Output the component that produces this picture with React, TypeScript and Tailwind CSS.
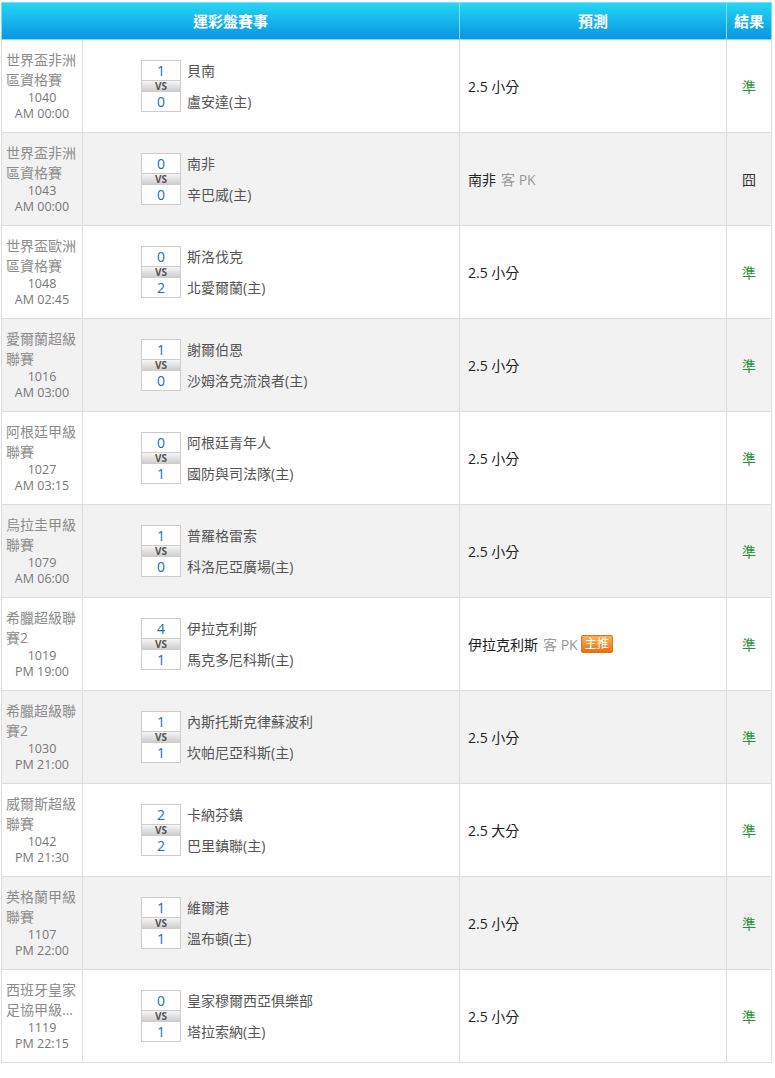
import React from "react";

type Row = {
  league: string[];
  code: string;
  time: string;
  s1: number;
  s2: number;
  t1: string;
  t2: string;
  pred: { main: string; sub?: string; badge?: boolean };
  result: string;
};

const rows: Row[] = [
  { league: ["世界盃非洲", "區資格賽"], code: "1040", time: "AM 00:00", s1: 1, s2: 0, t1: "貝南", t2: "盧安達(主)", pred: { main: "2.5 小分" }, result: "準" },
  { league: ["世界盃非洲", "區資格賽"], code: "1043", time: "AM 00:00", s1: 0, s2: 0, t1: "南非", t2: "辛巴威(主)", pred: { main: "南非", sub: "客 PK" }, result: "囧" },
  { league: ["世界盃歐洲", "區資格賽"], code: "1048", time: "AM 02:45", s1: 0, s2: 2, t1: "斯洛伐克", t2: "北愛爾蘭(主)", pred: { main: "2.5 小分" }, result: "準" },
  { league: ["愛爾蘭超級", "聯賽"], code: "1016", time: "AM 03:00", s1: 1, s2: 0, t1: "謝爾伯恩", t2: "沙姆洛克流浪者(主)", pred: { main: "2.5 小分" }, result: "準" },
  { league: ["阿根廷甲級", "聯賽"], code: "1027", time: "AM 03:15", s1: 0, s2: 1, t1: "阿根廷青年人", t2: "國防與司法隊(主)", pred: { main: "2.5 小分" }, result: "準" },
  { league: ["烏拉圭甲級", "聯賽"], code: "1079", time: "AM 06:00", s1: 1, s2: 0, t1: "普羅格雷索", t2: "科洛尼亞廣場(主)", pred: { main: "2.5 小分" }, result: "準" },
  { league: ["希臘超級聯", "賽2"], code: "1019", time: "PM 19:00", s1: 4, s2: 1, t1: "伊拉克利斯", t2: "馬克多尼科斯(主)", pred: { main: "伊拉克利斯", sub: "客 PK", badge: true }, result: "準" },
  { league: ["希臘超級聯", "賽2"], code: "1030", time: "PM 21:00", s1: 1, s2: 1, t1: "內斯托斯克律蘇波利", t2: "坎帕尼亞科斯(主)", pred: { main: "2.5 小分" }, result: "準" },
  { league: ["威爾斯超級", "聯賽"], code: "1042", time: "PM 21:30", s1: 2, s2: 2, t1: "卡納芬鎮", t2: "巴里鎮聯(主)", pred: { main: "2.5 大分" }, result: "準" },
  { league: ["英格蘭甲級", "聯賽"], code: "1107", time: "PM 22:00", s1: 1, s2: 1, t1: "維爾港", t2: "溫布頓(主)", pred: { main: "2.5 小分" }, result: "準" },
  { league: ["西班牙皇家", "足協甲級..."], code: "1119", time: "PM 22:15", s1: 0, s2: 1, t1: "皇家穆爾西亞俱樂部", t2: "塔拉索納(主)", pred: { main: "2.5 小分" }, result: "準" },
];

const font = { fontFamily: '"Open Sans", "Noto Sans CJK TC", sans-serif' };

function ScoreBox({ s1, s2, t1, t2 }: { s1: number; s2: number; t1: string; t2: string }) {
  return (
    <div className="flex flex-col pl-[58px]">
      <div className="flex items-center h-[21px]">
        <div className="w-[40px] h-[21px] border border-[#cccccc] bg-white flex items-center justify-center text-[14px] text-[#1b6eb3] leading-none">
          {s1}
        </div>
        <div className="ml-[6px] text-[14px] text-[#555555] whitespace-nowrap">{t1}</div>
      </div>
      <div className="flex items-center h-[10px]">
        <div className="w-[40px] h-[10px] border-x border-[#cccccc] bg-gradient-to-b from-[#f6f6f6] via-[#e2e2e2] to-[#cfcfcf] flex items-center justify-center text-[10px] font-bold text-[#555555] leading-none">
          VS
        </div>
      </div>
      <div className="flex items-center h-[21px]">
        <div className="w-[40px] h-[21px] border border-[#cccccc] bg-white flex items-center justify-center text-[14px] text-[#1b6eb3] leading-none">
          {s2}
        </div>
        <div className="ml-[6px] text-[14px] text-[#555555] whitespace-nowrap">{t2}</div>
      </div>
    </div>
  );
}

export default function App() {
  return (
    <div className="bg-white pt-[2px] pl-[1px] w-[775px] min-h-[1078px]" style={font}>
      <table className="border-collapse w-[770px] table-fixed">
        <colgroup>
          <col className="w-[81px]" />
          <col className="w-[377px]" />
          <col className="w-[267px]" />
          <col className="w-[45px]" />
        </colgroup>
        <thead>
          <tr className="h-[37px] bg-gradient-to-b from-[#26d6f2] to-[#0a94e2]">
            <th colSpan={2} className="border border-[#7fdcf4] text-white font-bold text-[15px] text-center">
              運彩盤賽事
            </th>
            <th className="border border-[#7fdcf4] text-white font-bold text-[15px] text-center">預測</th>
            <th className="border border-[#7fdcf4] text-white font-bold text-[15px] text-center">結果</th>
          </tr>
        </thead>
        <tbody>
          {rows.map((r, i) => (
            <tr key={i} className={i % 2 === 0 ? "h-[93px] bg-white" : "h-[93px] bg-[#f2f2f2]"}>
              <td className="border border-[#dddddd] px-[4px] align-middle">
                <div className="text-[14px] leading-[20px] text-[#8c8c8c]">
                  {r.league.map((l, j) => (
                    <div key={j} className="whitespace-nowrap">{l}</div>
                  ))}
                </div>
                <div className="text-[12.5px] leading-[16px] text-[#777777] text-center">
                  <div>{r.code}</div>
                  <div>{r.time}</div>
                </div>
              </td>
              <td className="border border-[#dddddd] align-middle">
                <ScoreBox s1={r.s1} s2={r.s2} t1={r.t1} t2={r.t2} />
              </td>
              <td className="border border-[#dddddd] pl-[8px] align-middle">
                <div className="flex items-center text-[14px]">
                  <span className="text-[#222222]">{r.pred.main}</span>
                  {r.pred.sub && <span className="ml-[5px] text-[#999999]">{r.pred.sub}</span>}
                  {r.pred.badge && (
                    <span className="ml-[3px] inline-flex items-center justify-center h-[18px] px-[3px] rounded-[2px] border border-[#e0741a] bg-gradient-to-b from-[#fbb24e] to-[#ea6e12] text-white text-[12px] leading-none">
                      主推
                    </span>
                  )}
                </div>
              </td>
              <td className="border border-[#dddddd] text-center align-middle">
                <span className={r.result === "準" ? "text-[14px] text-[#279436]" : "text-[14px] text-[#333333]"}>
                  {r.result}
                </span>
              </td>
            </tr>
          ))}
        </tbody>
      </table>
    </div>
  );
}
